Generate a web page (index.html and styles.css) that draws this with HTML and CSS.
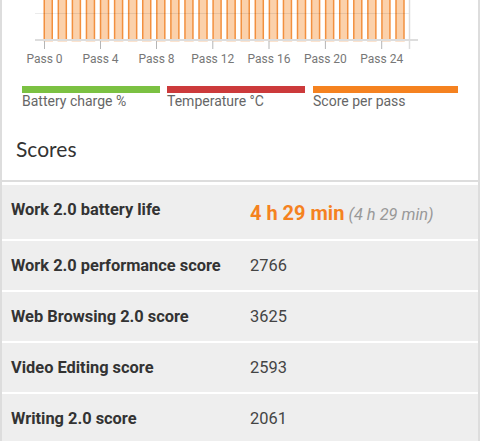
FILE: index.html
```html
<!DOCTYPE html>
<html lang="en">
<head>
<meta charset="utf-8">
<title>Scores</title>
<link rel="stylesheet" href="styles.css">
</head>
<body>
<div class="card">
  <svg class="chart" width="476" height="70" viewBox="0 0 476 70" xmlns="http://www.w3.org/2000/svg">
    <g class="bars" fill="#fbd1ab" stroke="#f2903f" stroke-width="1.5">
      <rect x="42.25" y="-5" width="8" height="45.5"/>
      <rect x="56.32" y="-5" width="8" height="45.5"/>
      <rect x="70.39" y="-5" width="8" height="45.5"/>
      <rect x="84.46" y="-5" width="8" height="45.5"/>
      <rect x="98.53" y="-5" width="8" height="45.5"/>
      <rect x="112.6" y="-5" width="8" height="45.5"/>
      <rect x="126.67" y="-5" width="8" height="45.5"/>
      <rect x="140.74" y="-5" width="8" height="45.5"/>
      <rect x="154.81" y="-5" width="8" height="45.5"/>
      <rect x="168.88" y="-5" width="8" height="45.5"/>
      <rect x="182.95" y="-5" width="8" height="45.5"/>
      <rect x="197.02" y="-5" width="8" height="45.5"/>
      <rect x="211.09" y="-5" width="8" height="45.5"/>
      <rect x="225.16" y="-5" width="8" height="45.5"/>
      <rect x="239.23" y="-5" width="8" height="45.5"/>
      <rect x="253.3" y="-5" width="8" height="45.5"/>
      <rect x="267.37" y="-5" width="8" height="45.5"/>
      <rect x="281.44" y="-5" width="8" height="45.5"/>
      <rect x="295.51" y="-5" width="8" height="45.5"/>
      <rect x="309.58" y="-5" width="8" height="45.5"/>
      <rect x="323.65" y="-5" width="8" height="45.5"/>
      <rect x="337.72" y="-5" width="8" height="45.5"/>
      <rect x="351.79" y="-5" width="8" height="45.5"/>
      <rect x="365.86" y="-5" width="8" height="45.5"/>
      <rect x="379.93" y="-5" width="8" height="45.5"/>
      <rect x="394" y="-5" width="8" height="45.5"/>
    </g>
    <line x1="33" y1="13.5" x2="407" y2="13.5" stroke="rgba(0,0,0,0.08)" stroke-width="1"/>
    <line x1="407.5" y1="0" x2="407.5" y2="49" stroke="#dddddd" stroke-width="1.5"/>
    <line x1="33" y1="40" x2="416" y2="40" stroke="#dddddd" stroke-width="2"/>
    <g stroke="#b5b5b5" stroke-width="1">
      <line x1="42.5" y1="41" x2="42.5" y2="49"/>
      <line x1="98.5" y1="41" x2="98.5" y2="49"/>
      <line x1="154.5" y1="41" x2="154.5" y2="49"/>
      <line x1="210.8" y1="41" x2="210.8" y2="49"/>
      <line x1="267" y1="41" x2="267" y2="49"/>
      <line x1="323.4" y1="41" x2="323.4" y2="49"/>
      <line x1="379.7" y1="41" x2="379.7" y2="49"/>
    </g>
    <g class="axis-labels" text-anchor="middle">
      <text x="42.5" y="62.5">Pass 0</text>
      <text x="98.5" y="62.5">Pass 4</text>
      <text x="154.5" y="62.5">Pass 8</text>
      <text x="210.8" y="62.5">Pass 12</text>
      <text x="267" y="62.5">Pass 16</text>
      <text x="323.4" y="62.5">Pass 20</text>
      <text x="379.7" y="62.5">Pass 24</text>
    </g>
  </svg>

  <div class="legend">
    <div class="legend-item item-battery">
      <span class="swatch"></span>
      <span class="legend-label">Battery charge %</span>
    </div>
    <div class="legend-item item-temp">
      <span class="swatch"></span>
      <span class="legend-label">Temperature °C</span>
    </div>
    <div class="legend-item item-score">
      <span class="swatch"></span>
      <span class="legend-label">Score per pass</span>
    </div>
  </div>

  <h2 class="scores-title">Scores</h2>

  <div class="rows">
    <div class="row row-main">
      <div class="label">Work 2.0 battery life</div>
      <div class="value"><span class="big">4 h 29 min</span> <span class="sub">(4 h 29 min)</span></div>
    </div>
    <div class="row">
      <div class="label">Work 2.0 performance score</div>
      <div class="value">2766</div>
    </div>
    <div class="row">
      <div class="label">Web Browsing 2.0 score</div>
      <div class="value">3625</div>
    </div>
    <div class="row">
      <div class="label">Video Editing score</div>
      <div class="value">2593</div>
    </div>
    <div class="row">
      <div class="label">Writing 2.0 score</div>
      <div class="value">2061</div>
    </div>
  </div>
</div>
</body>
</html>
```

FILE: styles.css
```css
* {
  box-sizing: border-box;
}

html, body {
  margin: 0;
  padding: 0;
  background: #ffffff;
}

body {
  font-family: Roboto, "Liberation Sans", sans-serif;
  color: #333333;
}

.card {
  width: 480px;
  min-height: 100vh;
  border-left: 2px solid #dddddd;
  border-right: 2px solid #dddddd;
  background: #ffffff;
}

.chart {
  display: block;
}

.axis-labels {
  font-family: Roboto, "Liberation Sans", sans-serif;
  font-size: 12px;
  fill: #777777;
}

.legend {
  display: flex;
  margin-top: 16px;
  padding-left: 20px;
}

.legend-item {
  display: flex;
  flex-direction: column;
}

.item-battery { width: 138px; margin-right: 7px; }
.item-temp { width: 138px; margin-right: 8px; }
.item-score { width: 145px; }

.swatch {
  display: block;
  height: 7px;
}

.item-battery .swatch { background: #7bc142; }
.item-temp .swatch { background: #cc3a3b; }
.item-score .swatch { background: #f58220; }

.legend-label {
  font-size: 14px;
  line-height: 17px;
  color: #666666;
  white-space: nowrap;
}

.scores-title {
  margin: 26px 0 0 0;
  padding: 0 0 19px 14px;
  font-family: Lato, "Open Sans", sans-serif;
  font-weight: 400;
  font-size: 21px;
  line-height: 25px;
  color: #333333;
  border-bottom: 2px solid #dddddd;
}

.rows {
  display: flex;
  flex-direction: column;
  gap: 2px;
  margin-top: 3px;
}

.row {
  display: grid;
  grid-template-columns: 239px 1fr;
  align-items: start;
  background: #eeeeee;
  padding: 13px 9px 13px 9px;
}

.row-main {
  padding: 13px 9px 9px 9px;
}

.label {
  font-size: 16.4px;
  font-weight: 700;
  line-height: 23px;
  color: #333333;
}

.value {
  font-size: 16.4px;
  line-height: 23px;
  color: #444444;
}

.row-main .value {
  line-height: 30px;
}

.big {
  font-size: 20px;
  font-weight: 700;
  color: #f5821f;
}

.sub {
  font-size: 16.4px;
  font-style: italic;
  color: #999999;
}
```
